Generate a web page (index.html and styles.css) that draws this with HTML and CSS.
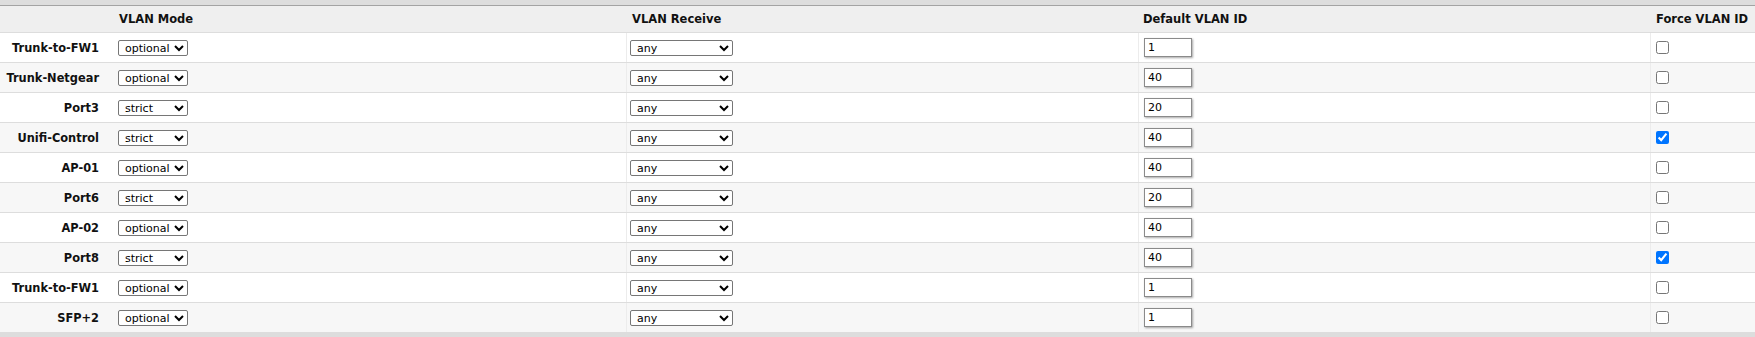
FILE: index.html
```html
<!DOCTYPE html>
<html>
<head>
<meta charset="utf-8">
<link rel="stylesheet" href="styles.css">
</head>
<body>
<div class="page">
  <div class="grid">
    <div class="row head">
      <div class="c lbl"></div>
      <div class="c mode h-mode">VLAN Mode</div>
      <div class="c recv h-recv">VLAN Receive</div>
      <div class="c pvid h-pvid">Default VLAN ID</div>
      <div class="c force h-force">Force VLAN ID</div>
    </div>

    <div class="row">
      <div class="c lbl">Trunk-to-FW1</div>
      <div class="c mode"><select class="sel-mode"><option>optional</option><option>strict</option></select></div>
      <div class="c recv bl"><select class="sel-recv"><option>any</option></select></div>
      <div class="c pvid bl"><input class="vid" type="text" value="1"></div>
      <div class="c force bl"><input class="chk" type="checkbox"></div>
    </div>
    <div class="row alt">
      <div class="c lbl">Trunk-Netgear</div>
      <div class="c mode"><select class="sel-mode"><option>optional</option><option>strict</option></select></div>
      <div class="c recv bl"><select class="sel-recv"><option>any</option></select></div>
      <div class="c pvid bl"><input class="vid" type="text" value="40"></div>
      <div class="c force bl"><input class="chk" type="checkbox"></div>
    </div>
    <div class="row">
      <div class="c lbl">Port3</div>
      <div class="c mode"><select class="sel-mode"><option>strict</option><option>optional</option></select></div>
      <div class="c recv bl"><select class="sel-recv"><option>any</option></select></div>
      <div class="c pvid bl"><input class="vid" type="text" value="20"></div>
      <div class="c force bl"><input class="chk" type="checkbox"></div>
    </div>
    <div class="row alt">
      <div class="c lbl">Unifi-Control</div>
      <div class="c mode"><select class="sel-mode"><option>strict</option><option>optional</option></select></div>
      <div class="c recv bl"><select class="sel-recv"><option>any</option></select></div>
      <div class="c pvid bl"><input class="vid" type="text" value="40"></div>
      <div class="c force bl"><input class="chk" type="checkbox" checked></div>
    </div>
    <div class="row">
      <div class="c lbl">AP-01</div>
      <div class="c mode"><select class="sel-mode"><option>optional</option><option>strict</option></select></div>
      <div class="c recv bl"><select class="sel-recv"><option>any</option></select></div>
      <div class="c pvid bl"><input class="vid" type="text" value="40"></div>
      <div class="c force bl"><input class="chk" type="checkbox"></div>
    </div>
    <div class="row alt">
      <div class="c lbl">Port6</div>
      <div class="c mode"><select class="sel-mode"><option>strict</option><option>optional</option></select></div>
      <div class="c recv bl"><select class="sel-recv"><option>any</option></select></div>
      <div class="c pvid bl"><input class="vid" type="text" value="20"></div>
      <div class="c force bl"><input class="chk" type="checkbox"></div>
    </div>
    <div class="row">
      <div class="c lbl">AP-02</div>
      <div class="c mode"><select class="sel-mode"><option>optional</option><option>strict</option></select></div>
      <div class="c recv bl"><select class="sel-recv"><option>any</option></select></div>
      <div class="c pvid bl"><input class="vid" type="text" value="40"></div>
      <div class="c force bl"><input class="chk" type="checkbox"></div>
    </div>
    <div class="row alt">
      <div class="c lbl">Port8</div>
      <div class="c mode"><select class="sel-mode"><option>strict</option><option>optional</option></select></div>
      <div class="c recv bl"><select class="sel-recv"><option>any</option></select></div>
      <div class="c pvid bl"><input class="vid" type="text" value="40"></div>
      <div class="c force bl"><input class="chk" type="checkbox" checked></div>
    </div>
    <div class="row">
      <div class="c lbl">Trunk-to-FW1</div>
      <div class="c mode"><select class="sel-mode"><option>optional</option><option>strict</option></select></div>
      <div class="c recv bl"><select class="sel-recv"><option>any</option></select></div>
      <div class="c pvid bl"><input class="vid" type="text" value="1"></div>
      <div class="c force bl"><input class="chk" type="checkbox"></div>
    </div>
    <div class="row alt">
      <div class="c lbl">SFP+2</div>
      <div class="c mode"><select class="sel-mode"><option>optional</option><option>strict</option></select></div>
      <div class="c recv bl"><select class="sel-recv"><option>any</option></select></div>
      <div class="c pvid bl"><input class="vid" type="text" value="1"></div>
      <div class="c force bl"><input class="chk" type="checkbox"></div>
    </div>
  </div>
</div>
</body>
</html>
```

FILE: styles.css
```css
html, body {
  margin: 0;
  padding: 0;
  background: #dddddd;
}

body {
  font-family: "DejaVu Sans", Verdana, sans-serif;
  font-size: 11px;
  color: #111111;
}

.page {
  padding: 5px 0 4px 0;
  background: #dddddd;
}

.grid {
  border-top: 1px solid #a3a3a3;
  background: #ffffff;
}

.row {
  display: grid;
  grid-template-columns: 112px 514px 512px 512px 105px;
  height: 30px;
  box-sizing: border-box;
  border-bottom: 1px solid #dddddd;
  background: #ffffff;
}

.row.alt {
  background: #f7f7f7;
}

.row.head {
  height: 27px;
  background: #efefef;
  font-weight: bold;
  font-size: 11.5px;
}

.c {
  display: flex;
  align-items: center;
  box-sizing: border-box;
  min-width: 0;
  white-space: nowrap;
}

.bl {
  border-left: 1px solid #ececec;
}

.lbl {
  justify-content: flex-end;
  padding-right: 13px;
  font-weight: bold;
  font-size: 11.4px;
}

.mode { padding-left: 6px; }
.recv { padding-left: 3px; }
.pvid { padding-left: 5px; }
.force { padding-left: 5px; }

.h-mode { padding-left: 7px; }
.h-recv { padding-left: 6px; }
.h-pvid { padding-left: 5px; }
.h-force { padding-left: 6px; }

select {
  font-family: "DejaVu Sans", Verdana, sans-serif;
  font-size: 11px;
  height: 16px;
  padding: 0 0 0 2px;
  margin: 0;
  color: #000000;
  background-color: #ffffff;
  border: 1px solid #767676;
  border-radius: 2px;
  box-sizing: border-box;
}

.sel-mode { width: 70px; }
.sel-recv { width: 103px; }

.vid {
  font-family: "DejaVu Sans", Verdana, sans-serif;
  font-size: 11px;
  color: #000000;
  width: 48px;
  height: 19px;
  box-sizing: border-box;
  margin: 0;
  padding: 0 3px;
  border: 1px solid #8a8a8a;
  background: #ffffff;
  box-shadow: 1px 1px 2px rgba(0, 0, 0, 0.35);
  outline: none;
}

.chk {
  width: 13px;
  height: 13px;
  margin: 0;
}
```
